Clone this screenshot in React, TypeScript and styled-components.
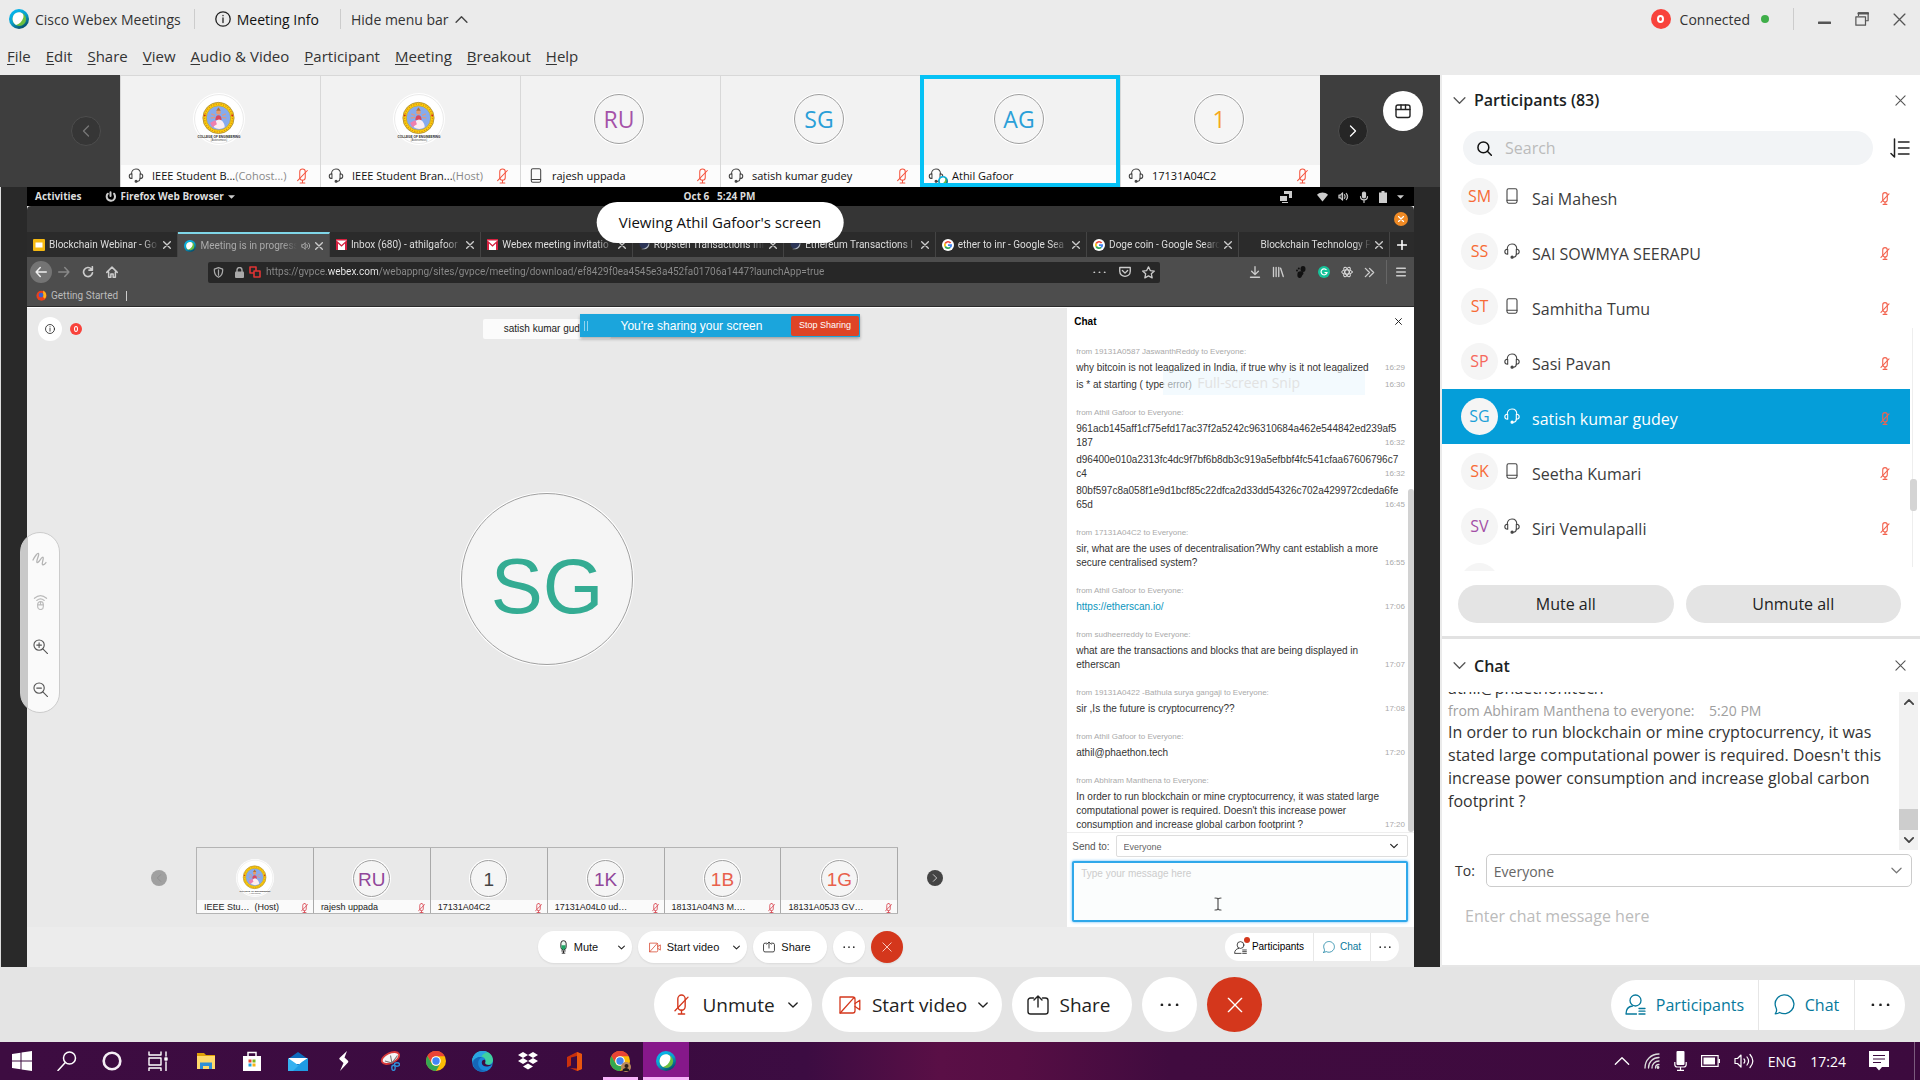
import React from "react";
import styled, { createGlobalStyle, css } from "styled-components";

const UI = '"Open Sans", "Noto Sans", sans-serif';
const ARIAL = '"Liberation Sans", Arial, sans-serif';
const BROWSER = 'Roboto, "Open Sans", sans-serif';

const Global = createGlobalStyle`
  *, *::before, *::after { box-sizing: border-box; }
  body { margin: 0; background: #ebebeb; font-family: ${UI}; color: #333; }
  button, input, select, textarea { font: inherit; color: inherit; margin: 0; }
  button { border: 0; background: none; padding: 0; cursor: pointer; }
  svg { display: block; flex: none; }
  ul { list-style: none; margin: 0; padding: 0; }
  h2, p { margin: 0; }
`;

/* ---------- icons ---------- */
type IconProps = { w?: number; h?: number; color?: string };

const Line = ({
  w = 16, h = w, box = "0 0 16 16", color = "currentColor", sw = 1.2, children,
}: IconProps & { box?: string; sw?: number; children: React.ReactNode }) => (
  <svg width={w} height={h} viewBox={box} fill="none" stroke={color} strokeWidth={sw} strokeLinecap="round" strokeLinejoin="round" aria-hidden="true">
    {children}
  </svg>
);

const MicOff = ({ w = 12, h = 17, color = "#f5523c", sw = 1.3 }: IconProps & { sw?: number }) => (
  <Line w={w} h={h} box="0 0 14 20" color={color} sw={sw}>
    <rect x="3.5" y="1" width="7" height="14.5" rx="3.5" />
    <path d="M7 15.5v3.5M4 19h6M.8 16L13.2 3" />
  </Line>
);
const MicOn = ({ w = 9, h = 14 }: IconProps) => (
  <svg width={w} height={h} viewBox="0 0 10 16" fill="none" stroke="#222" strokeWidth="1.1" aria-hidden="true">
    <rect x="2" y=".8" width="6" height="10.4" rx="3" fill="#e9f7ef" />
    <path d="M2.6 6h4.8v2.6a2.4 2.4 0 0 1-4.8 0z" fill="#1fa564" stroke="none" />
    <path d="M2.5 12.5h5M5 12.5V15M3 15h4" />
  </svg>
);
const Headset = ({ w = 16, h = 16, color = "#444" }: IconProps) => (
  <Line w={w} h={h} color={color} sw={1.1}>
    <path d="M3.2 6.4C3.2 3 5.2 1 8 1s4.8 2 4.8 5.4" />
    <path d="M3.7 6.2c-1.7 0-2.9 1-2.9 2.5s1.2 2.5 2.9 2.5zM12.3 6.2c1.7 0 2.9 1 2.9 2.5s-1.2 2.5-2.9 2.5z" />
    <path d="M12.3 11.2c0 2-1.2 2.9-2.9 3.1" />
    <circle cx="8.1" cy="14.2" r="1.1" fill={color} />
  </Line>
);
const Phone = ({ w = 12, h = 16, color = "#444" }: IconProps) => (
  <Line w={w} h={h} box="0 0 12 16" color={color} sw={1.1}>
    <rect x="1" y=".8" width="10" height="14.4" rx="1.6" />
    <path d="M1 12.2h10" />
  </Line>
);
const VideoOff = ({ w = 22, h = 20, color = "#d4371c" }: IconProps) => (
  <Line w={w} h={h} box="0 0 22 20" color={color} sw={1.3}>
    <path d="M16 6V4.2C16 2.8 15.2 2 13.8 2H1v16h12.8c1.4 0 2.2-.8 2.2-2.2V6" />
    <path d="M16 8.5l4.8-3.3v9.6L16 11.5M1.2 18L15 2.6" />
  </Line>
);
const ShareIcon = ({ w = 22, h = 20 }: IconProps) => (
  <Line w={w} h={h} box="0 0 22 20" sw={1.4}>
    <path d="M6.5 3H3.6C2 3 1 4 1 5.6v10.8C1 18 2 19 3.6 19h14.8c1.6 0 2.6-1 2.6-2.6V5.6C21 4 20 3 18.4 3h-2.9M11 12V1.3M7 5l4-4 4 4" />
  </Line>
);
const Dots = ({ w = 20, color = "#222" }: IconProps) => (
  <svg width={w} height={w / 5} viewBox="0 0 20 4" fill={color} aria-hidden="true">
    <circle cx="2" cy="2" r="1.4" /><circle cx="10" cy="2" r="1.4" /><circle cx="18" cy="2" r="1.4" />
  </svg>
);
const Cross = ({ w = 12, color = "#444", sw = 1.2 }: IconProps & { sw?: number }) => (
  <Line w={w} box="0 0 12 12" color={color} sw={sw}><path d="M1 1l10 10M11 1L1 11" /></Line>
);
const Chev = ({ w = 12, dir = "down", color = "#444", sw = 1.3 }: IconProps & { dir?: "down" | "up" | "left" | "right"; sw?: number }) => {
  const d = { down: "M1 3.5l5 5 5-5", up: "M1 8.5l5-5 5 5", left: "M8.5 1l-5 5 5 5", right: "M3.5 1l5 5-5 5" }[dir];
  return <Line w={w} box="0 0 12 12" color={color} sw={sw}><path d={d} /></Line>;
};
const People = ({ w = 21, color = "#07799c" }: IconProps) => (
  <Line w={w} box="0 0 21 21" color={color} sw={1.3}>
    <circle cx="10.5" cy="6.5" r="5.5" />
    <path d="M7.5 12C3.5 12.5 1 15.5 1 20h10.5M14 14.5h6M14 17.2h6M14 20h6" />
  </Line>
);
const Bubble = ({ w = 21, color = "#07799c" }: IconProps) => (
  <Line w={w} box="0 0 21 21" color={color} sw={1.3}>
    <path d="M1.2 19.8c1.3-1.6 1.7-3.2 1.2-5C.6 11 .8 7 3.3 4.2 6.8.2 12.8-.1 16.7 3.2c4 3.5 4.3 9.3.9 13.1-3.1 3.6-8.3 4.3-12 2.2-1.3.9-2.7 1.3-4.4 1.3z" />
  </Line>
);
const Info = ({ w = 16 }: IconProps) => (
  <Line w={w} sw={1.3} color="#222">
    <circle cx="8" cy="8" r="7.2" /><path d="M8 7v4.5M8 4.3v.4" />
  </Line>
);
const Webex = ({ w = 20 }: IconProps) => (
  <svg width={w} height={w} viewBox="0 0 20 20" aria-hidden="true">
    <defs>
      <linearGradient id="wbx" x1=".2" y1="0" x2=".8" y2="1">
        <stop offset="0" stopColor="#06b9f2" /><stop offset=".5" stopColor="#0a9fc9" /><stop offset="1" stopColor="#06405a" />
      </linearGradient>
    </defs>
    <circle cx="10" cy="10" r="10" fill="url(#wbx)" />
    <circle cx="10.3" cy="10.2" r="6.8" fill="#6cbf3f" />
    <path d="M3.8 11.5C3 7 5.5 3.4 9.8 3.2c3.6-.1 5.4 2.2 4.5 5.5-1.1 3.6-4 6.4-7.3 7.2-1.7-.9-2.9-2.5-3.2-4.4z" fill="#fff" />
  </svg>
);
const Crest = ({ w = 50 }: IconProps) => (
  <svg width={w} height={w} viewBox="0 0 50 50" aria-hidden="true">
    <circle cx="25" cy="25" r="25" fill="#fff" />
    <circle cx="25" cy="25" r="23.5" fill="#fff" stroke="#ddd" strokeWidth=".6" />
    <circle cx="24.5" cy="24" r="15" fill="#fbd20a" stroke="#a98a3a" strokeWidth=".8" />
    <circle cx="24.5" cy="24" r="13.4" fill="none" stroke="#e08a12" strokeWidth="1.2" strokeDasharray="1.2 1.2" />
    <circle cx="11.3" cy="21.5" r=".9" fill="#d8201c" /><circle cx="37.7" cy="21.5" r=".9" fill="#d8201c" />
    <circle cx="24.5" cy="24" r="11.8" fill="#86abee" stroke="#d8a90e" strokeWidth=".8" />
    <circle cx="24.5" cy="18.5" r="2.2" fill="#e79a6c" />
    <path d="M22.3 17l2.2-3.3 2.2 3.3z" fill="#b8742c" />
    <path d="M17.5 20l3.5 1.5M31.5 20L28 21.5M17 24l4-.5M32 24l-4-.5" stroke="#d99a86" strokeWidth="1.3" />
    <path d="M21.5 26c0-3 1-4.5 3-4.5s3 1.5 3 4.500z" fill="#d9485f" />
    <path d="M20 33c0-4 2.500-7.500 5-7.500s5.500 3.500 5.500 7.500c-3.500 2-7 2-10.500 0z" fill="#fbeef2" />
    <path d="M16.5 28.5l5-2.5 1.5 4-4.500 3z" fill="#ee7fb0" />
    <text x="25" y="43" fontSize="3" fontWeight="700" fontFamily="Liberation Sans" textAnchor="middle" fill="#222">COLLEGE OF ENGINEERING</text>
    <text x="25" y="46.5" fontSize="2.5" fontFamily="Liberation Sans" textAnchor="middle" fill="#444">(Autonomous)</text>
  </svg>
);

/* ---------- frame ---------- */
const Shell = styled.div`
  display: flex; flex-direction: column; height: 100vh; min-height: 900px; overflow: hidden;
`;
const Gap = styled.i<{ $w: number }>`flex: none; width: ${(p) => p.$w}px;`;
const TitleBar = styled.header`
  display: flex; align-items: center; height: 38px; padding: 0 14px 0 9px; font-size: 14px; color: #333;
`;
const Brand = styled.div`display: flex; align-items: center; gap: 6px;`;
const Rule = styled.i<{ $h?: number; $c?: string; $m?: string }>`
  flex: none; width: 1px; height: ${(p) => p.$h ?? 20}px; background: ${(p) => p.$c ?? "#ccc"}; margin: ${(p) => p.$m ?? "0 10px"};
`;
const BarButton = styled.button<{ $dark?: boolean }>`display: flex; align-items: center; gap: 6px; ${(p) => p.$dark && "color: #111;"}`;
const Spacer = styled.div`flex: 1;`;
const RedDot = styled.span<{ $d: number }>`
  display: grid; place-items: center; flex: none; width: ${(p) => p.$d}px; height: ${(p) => p.$d}px; border-radius: 50%; background: #f8423b;
  &::after {
    content: ""; width: ${(p) => (p.$d > 15 ? 7 : 4)}px; height: ${(p) => (p.$d > 15 ? 8 : 6)}px;
    border: ${(p) => (p.$d > 15 ? 2 : 1)}px solid #fff; border-radius: 50%;
  }
`;
const GreenDot = styled.i`width: 8px; height: 8px; border-radius: 50%; background: #3fae49; margin-left: 11px;`;
const WindowButtons = styled.div`display: flex; align-items: center; gap: 24px;`;
const MenuBar = styled.nav`
  display: flex; align-items: center; gap: 15px; height: 37px; padding: 0 7px 2px; font-size: 15px; color: #333;
`;
const Mnemonic = styled.span`text-decoration: underline; text-underline-offset: 2px;`;
const Body = styled.div`display: flex; flex: 1; min-height: 0;`;
const Left = styled.main`position: relative; display: flex; flex-direction: column; flex: 1; min-width: 0;`;

/* ---------- film strip ---------- */
const Strip = styled.section`
  display: grid; grid-template-columns: 120px minmax(0, 1fr) 120px; height: 112px; background: #3e3e3e;
`;
const StripEnd = styled.div<{ $right?: boolean }>`
  display: flex; align-items: center; gap: 15px; padding: ${(p) => (p.$right ? "0 0 0 18px" : "0 0 0 71px")};
`;
const RoundArrow = styled.button<{ $dim?: boolean }>`
  display: grid; place-items: center; width: 30px; height: 30px; border-radius: 50%; background: ${(p) => (p.$dim ? "#363636" : "#262626")};
  border: 1px solid #4d4d4d;
`;
const LayoutButton = styled.button`
  display: grid; place-items: center; align-self: flex-start; width: 40px; height: 40px; margin-top: 16px; border-radius: 50%; background: #fff;
`;
const Tiles = styled.ul`display: grid; grid-template-columns: repeat(6, minmax(0, 1fr));`;
const Tile = styled.li<{ $active?: boolean }>`
  position: relative; display: flex; flex-direction: column; background: #f2f2f2;
  border-left: 1px solid #d8d8d8; border-top: 1px solid #d8d8d8;
  ${(p) => p.$active && css`&::after { content: ""; position: absolute; inset: -1px 0 0 -1px; border: 4px solid #06c2f5; }`}
`;
const TileFace = styled.div`display: grid; place-items: center; flex: 1; padding: 0 3px 3px 0;`;
const Initials = styled.span<{ $d: number; $c: string; $s: number; $font?: string; $drop?: number }>`
  display: grid; place-items: center; flex: none; width: ${(p) => p.$d}px; height: ${(p) => p.$d}px; border-radius: 50%;
  border: 1px solid #9f9f9f; background: #f5f5f5; box-shadow: 0 0 0 1px #fff; color: ${(p) => p.$c};
  padding-top: ${(p) => p.$drop ?? 0}px;
  font: 400 ${(p) => p.$s}px/1 ${(p) => p.$font ?? UI};
`;
const TileLabel = styled.div`
  display: flex; align-items: center; height: 22px; padding: 0 12px 1px 7px; background: #fcfcfc; font-size: 11px; color: #111; white-space: nowrap;
`;
const TileIcon = styled.span`position: relative; display: grid; justify-items: center; width: 16px; margin-right: 8px;`;
const Badge = styled.span`position: absolute; right: -4px; bottom: -3px;`;
const TileName = styled.span`flex: 1; small { font-size: 11px; color: #888; }`;

/* ---------- shared screen ---------- */
const Stage = styled.section`
  position: relative; display: flex; flex: 1; min-height: 0; padding: 0 26px; background: #292929; border-left: 1px solid #ddd;
`;
const Desktop = styled.div`display: flex; flex-direction: column; flex: 1; min-width: 0; background: #e9e9e9;`;
const GnomeBar = styled.div`
  display: grid; grid-template-columns: 1fr auto 1fr; align-items: center; height: 19px; padding: 0 10px 0 8px; background: #000;
  font: 700 10px/19px ${UI}; color: #ddd;
`;
const Cluster = styled.div<{ $gap: number; $end?: boolean; $pad?: number }>`
  display: flex; align-items: center; gap: ${(p) => p.$gap}px; padding-left: ${(p) => p.$pad ?? 0}px;
  justify-content: ${(p) => (p.$end ? "flex-end" : "flex-start")};
`;
const WindowTop = styled.div`
  display: flex; align-items: center; justify-content: flex-end; height: 26px; padding: 0 6px; background: #353535; border-radius: 4px 4px 0 0;
`;
const OrangeClose = styled.button`display: grid; place-items: center; width: 14px; height: 14px; border-radius: 50%; background: #f08a24;`;
const TabBar = styled.div`display: flex; height: 25px; background: #2b2b2b;`;
const Tab = styled.button<{ $on?: boolean }>`
  display: flex; align-items: center; gap: 4px; flex: 1 1 0; min-width: 0; padding: 0 6px; text-align: left;
  font: 400 10px/16px ${BROWSER}; color: ${(p) => (p.$on ? "#aaa" : "#ddd")}; background: ${(p) => (p.$on ? "#4d4d4d" : "transparent")};
  border-right: 1px solid #444; ${(p) => p.$on && "border-top: 2px solid #7fd6e8;"}
`;
const TabText = styled.span`
  flex: 1; min-width: 0; overflow: hidden; white-space: nowrap; mask-image: linear-gradient(90deg, #000 85%, transparent);
`;
const NewTab = styled.button`display: grid; place-items: center; width: 24px;`;
const NavBar = styled.div`display: flex; align-items: center; height: 30px; padding: 0 8px 0 3px; background: #4d4d4d; color: #ccc;`;
const BackButton = styled.button`display: grid; place-items: center; width: 22px; height: 22px; border-radius: 50%; background: #747474;`;
const UrlBox = styled.label`
  display: flex; align-items: center; gap: 5px; flex: 1; height: 21px; margin: 0 89px 0 90px; padding: 0 5px; background: #272727; border-radius: 2px;
`;
const Url = styled.input`
  flex: 1; min-width: 0; border: 0; padding: 0; outline: 0; font: 400 10px/16px ${BROWSER}; color: transparent;
  background: linear-gradient(90deg, #8c8c8c 62px, #f0f0f0 62px, #f0f0f0 112px, #8c8c8c 112px);
  -webkit-background-clip: text; background-clip: text;
`;
const Bookmarks = styled.div`
  display: flex; align-items: center; gap: 4px; height: 20px; padding: 0 9px 2px; background: #4d4d4d; border-bottom: 1px solid #2a2a2a;
  font: 400 10px/16px ${BROWSER}; color: #bbb;
`;
const WebApp = styled.div`display: flex; flex-direction: column; flex: 1; min-height: 0; border-top: 1px solid #fff; font-family: ${ARIAL};`;
const WebMain = styled.div`display: grid; grid-template-columns: 3fr 1fr; flex: 1; min-height: 0;`;
const Speaker = styled.div`display: flex; flex-direction: column; min-width: 0;`;
const SpeakerTop = styled.div`
  display: grid; grid-template-columns: 1fr auto 1fr; align-items: center; height: 40px; padding: 2px 11px 0; font-size: 10px; color: #222;
`;
const InfoCircle = styled.button`display: grid; place-items: center; width: 24px; height: 24px; border-radius: 50%; background: #fff;`;
const NameChip = styled.span`padding: 0 21px; height: 20px; line-height: 20px; background: #fbfbfb; border-radius: 2px;`;
const SpeakerFace = styled.div`display: grid; place-items: center; flex: 1;`;
const Thumbs = styled.div`display: flex; align-items: center; gap: 29px; margin: 37px 124px 13px;`;
const SmallArrow = styled.button<{ $c: string }>`
  display: grid; place-items: center; flex: none; width: 16px; height: 16px; margin-bottom: 5px; border-radius: 50%; background: ${(p) => p.$c};
`;
const ThumbList = styled.ul`display: grid; grid-template-columns: repeat(6, minmax(0, 1fr)); flex: 1; border: 1px solid #b4b4b4; border-right: 0;`;
const Thumb = styled.li`display: flex; flex-direction: column; height: 65px; min-width: 0; border-right: 1px solid #a9a9a9;`;
const ThumbFace = styled.div`display: grid; place-items: center; height: 52px; padding-top: 8px;`;
const ThumbLabel = styled.div`
  display: flex; justify-content: space-between; align-items: center; flex: 1; padding: 2px 5px 0 7px; background: #fafafa; font-size: 9px; line-height: 11px; color: #222; white-space: pre;
`;

/* ---------- web chat ---------- */
const WebChat = styled.aside`display: flex; flex-direction: column; min-width: 0; min-height: 0; background: #fff;`;
const WebChatHead = styled.div`
  display: flex; align-items: center; justify-content: space-between; height: 26px; padding: 0 12px 0 7px; color: #000;
  h2 { font-size: 10px; }
`;
const WebLog = styled.div`
  position: relative; flex: 1; min-height: 0; overflow: hidden; padding: 11px 9px 0; border-bottom: 1px solid #eee;
`;
const Post = styled.section`
  margin-bottom: 14px; h3 { margin: 0 0 2px; font: 400 8px/14px ${ARIAL}; color: #aaa; }
`;
const PostBody = styled.div`
  font-size: 10px; line-height: 14px; color: #333; white-space: pre;
  & + & { margin-top: 3px; }
  a { color: #0a95bd; text-decoration: none; }
`;
const PostLine = styled.div`
  display: flex; justify-content: space-between; height: 14px;
  time { font-size: 8px; color: #aaa; }
`;
const WebThumb = styled.i`position: absolute; right: 0; top: 155px; bottom: 0; width: 6px; border-radius: 3px; background: #d2d2d2;`;
const Ghost = styled.span`
  position: absolute; left: 96px; top: 37px; width: 202px; padding-left: 34px; font: 400 14px/24px ${UI}; color: #e2e2e2; background: rgba(235, 246, 253, .6);
`;
const SendRow = styled.label`
  display: flex; align-items: center; gap: 6px; padding: 2px 6px 0 5px; font-size: 10px; color: #555;
`;
const SelectWrap = styled.span<{ $web?: boolean }>`
  display: grid; flex: 1; align-items: center; border: 1px solid ${(p) => (p.$web ? "#ddd" : "#ccc")}; border-radius: ${(p) => (p.$web ? 2 : 5)}px; background: #fff;
  > * { grid-area: 1 / 1; }
  svg { justify-self: end; margin-right: 9px; pointer-events: none; }
`;
const Select = styled.select<{ $h: number; $s: number }>`
  appearance: none; width: 100%; height: ${(p) => p.$h}px; padding: 1px 7px 0; border: 0; background: none; outline: 0; font-size: ${(p) => p.$s}px; color: #666;
`;
const WebCompose = styled.textarea`
  display: block; height: 61px; margin: 4px 6px 5px 5px; padding: 5px 7px; border: 2px solid #2fa8ea; border-radius: 2px; box-shadow: 0 0 3px #62b8f5;
  outline: 0; resize: none; font-size: 10px; background: #fbfdfd; &::placeholder { color: #ccc; opacity: 1; }
`;
const Caret = styled.span`position: absolute; right: 218px; bottom: 56px;`;
const WebBar = styled.div`
  display: grid; grid-template-columns: 1fr auto 1fr; align-items: center; height: 40px; padding: 0 15px; background: #ececec; color: #111;
`;
const WebGroup = styled.div`display: flex; grid-column: 2; gap: 6px;`;
const WebPill = styled.button<{ $w: number; $bg?: string; $pad?: string }>`
  display: flex; align-items: center; justify-content: center; gap: 6px; width: ${(p) => p.$w}px; height: 32px; padding: ${(p) => p.$pad ?? 0};
  border-radius: 16px; background: ${(p) => p.$bg ?? "#fff"}; font: 400 11px/1 ${ARIAL}; box-shadow: 0 1px 2px rgba(0, 0, 0, .08);
`;
const WebRight = styled.div`
  display: flex; justify-self: end; height: 28px; border-radius: 14px; overflow: hidden; background: #fff;
`;
const WebSeg = styled.button<{ $w: number; $c?: string }>`
  display: flex; align-items: center; justify-content: center; gap: 5px; width: ${(p) => p.$w}px; font: 400 10px/1 ${ARIAL}; color: ${(p) => p.$c ?? "#000"};
  & + & { border-left: 1px solid #e8e8e8; }
`;
const DotWrap = styled.span`position: relative; i { position: absolute; right: -3px; top: -4px; width: 6px; height: 6px; border-radius: 50%; background: #d4371c; }`;

/* ---------- overlays on the stage ---------- */
const ViewingPill = styled.div`
  position: absolute; left: 50%; top: 127px; transform: translateX(-50%); height: 41px; padding: 0 22px; border-radius: 21px;
  background: #fff; font-size: 15px; line-height: 41px; color: #111; white-space: nowrap;
`;
const SharingBanner = styled.div`
  position: absolute; left: 50%; top: 239px; transform: translateX(-50%); display: flex; align-items: center; width: 280px; height: 23px; padding: 1px;
  background: #1ba5dc; box-shadow: 0 2px 3px rgba(0, 0, 0, .3); font: 400 12px/1 ${ARIAL}; color: #fff;
  span { flex: 1; padding-left: 4px; text-align: center; }
  &::before { content: ""; width: 4px; height: 10px; margin-left: 3px; border: solid #8fd3ef; border-width: 0 1px; }
`;
const StopButton = styled.button`width: 68px; height: 20px; border-radius: 2px; background: #de4426; font: 400 9px/1 ${ARIAL}; color: #fff;`;
const ToolPill = styled.div`
  position: absolute; left: 20px; top: 457px; display: flex; flex-direction: column; align-items: center; justify-content: space-between; width: 40px; height: 181px; padding: 18px 0 15px;
  border: 1px solid #ccc; border-radius: 20px; background: linear-gradient(90deg, #c9c9c9 7px, #fafafa 7px);
`;

/* ---------- side panels ---------- */
const Side = styled.aside`
  display: flex; flex-direction: column; flex: 0 0 25%; border-left: 2px solid #ebebeb; background: #fff; color: #333;
`;
const PanelHead = styled.div<{ $h: number }>`
  display: flex; align-items: center; gap: 8px; height: ${(p) => p.$h}px; padding: 0 14px 0 11px;
  h2 { flex: 1; font-size: 16px; font-weight: 600; color: #1c1f24; }
`;
const PeoplePanel = styled.section`display: flex; flex-direction: column; flex: 1; min-height: 0;`;
const SearchRow = styled.div`display: flex; align-items: center; gap: 17px; padding: 6px 10px 4px 21px;`;
const SearchBox = styled.label`
  display: flex; align-items: center; gap: 13px; flex: 1; height: 34px; padding: 0 14px; border-radius: 17px; background: #f2f4f6;
  input { flex: 1; border: 0; padding: 0; background: none; outline: 0; font-size: 16px; }
  input::placeholder { color: #bbb; opacity: 1; }
`;
const ListWrap = styled.div`position: relative; flex: 1; min-height: 0; overflow: hidden; padding-right: 10px;`;
const Person = styled.li<{ $on?: boolean }>`
  display: flex; align-items: center; height: 55px; padding: 4px 20px 0 19px; background: ${(p) => (p.$on ? "#059ed9" : "#fff")}; color: ${(p) => (p.$on ? "#fff" : "#3c3c3c")};
  font-size: 16px;
`;
const Face = styled.span<{ $c: string }>`
  display: grid; place-items: center; width: 37px; height: 37px; margin-bottom: 5px; border-radius: 50%; background: #f5f5f5; color: ${(p) => p.$c}; font-size: 16px;
`;
const Device = styled.span`display: grid; justify-items: center; width: 16px; margin: 0 12px 5px 6px;`;
const PersonName = styled.span`flex: 1;`;
const Track = styled.i`position: absolute; right: 7px; top: 159px; bottom: 4px; width: 1px; background: #eee;`;
const ListThumb = styled.i`position: absolute; right: 3px; top: 310px; width: 7px; height: 32px; border-radius: 3px; background: #d4d4d4;`;
const AllRow = styled.div`display: flex; gap: 12px; padding: 14px 19px 13px 16px;`;
const AllButton = styled.button`flex: 1; height: 38px; border-radius: 19px; background: #e4e4e4; font-size: 16px; color: #222;`;
const ChatPanel = styled.section`border-top: 3px solid #e2e2e2;`;
const Log = styled.div`display: flex; height: 158px;`;
const LogText = styled.div`
  display: flex; flex-direction: column; justify-content: flex-end; flex: 1; overflow: hidden; padding: 0 0 37px 6px; font-size: 16px; line-height: 23px; color: #333;
  small { font-size: 14px; line-height: 21px; color: #a0a0a0; white-space: pre; }
  p { flex: none; white-space: pre-line; }
`;
const ScrollBar = styled.div`
  display: flex; flex-direction: column; align-items: center; width: 19px; margin-right: 2px; padding: 5px 0; background: #f1f1f1;
  i { width: 19px; height: 21px; background: #cdcdcd; margin: auto 0 5px; }
`;
const ToRow = styled.label`display: flex; align-items: center; gap: 11px; padding: 4px 8px 0 13px; font-size: 14px;`;
const Compose = styled.textarea`
  display: block; width: 100%; height: 78px; padding: 18px 23px; border: 0; outline: 0; resize: none; font-size: 16px;
  &::placeholder { color: #bbb; opacity: 1; }
`;
const ChatFoot = styled.div`height: 2px; background: #e6e6e6;`;

/* ---------- control bar ---------- */
const Controls = styled.footer`
  display: grid; grid-template-columns: 1fr auto 1fr; align-items: center; height: 75px; padding: 0 15px 0 11px; background: #e4e4e4;
`;
const ControlGroup = styled.div`display: flex; grid-column: 2; gap: 10px;`;
const Pill = styled.button<{ $w: number; $bg?: string; $pad?: string; $gap?: number }>`
  display: flex; align-items: center; justify-content: center; gap: ${(p) => p.$gap ?? 10}px; width: ${(p) => p.$w}px; height: 55px; padding: ${(p) => p.$pad ?? 0};
  border-radius: 28px; background: ${(p) => p.$bg ?? "#fff"}; font-size: 19px; color: #222; white-space: nowrap;
`;
const RightGroup = styled.div`display: flex; justify-self: end; height: 50px; border-radius: 25px; overflow: hidden; background: #fff;`;
const Seg = styled.button<{ $w: number }>`
  display: flex; align-items: center; justify-content: center; gap: 10px; width: ${(p) => p.$w}px; font-size: 16px; color: #07799c;
  & + & { border-left: 1px solid #e6e6e6; }
`;

/* ---------- taskbar ---------- */
const Taskbar = styled.footer`
  display: flex; height: 38px; color: #fff;
  background: linear-gradient(90deg, #3d0c41 0%, #3b0b40 34%, #3c0c42 42%, #5a0f46 49%, #560e44 53%, #400b3f 61%, #3c0a3e 100%);
`;
const Slot = styled.button<{ $w: number; $run?: boolean; $on?: boolean }>`
  display: grid; place-items: center; width: ${(p) => p.$w}px; height: 38px;
  background: ${(p) => (p.$on ? "#86188a" : "none")};
  box-shadow: ${(p) => (p.$on ? "inset 0 -3px #f7b4fa" : "none")};
  ${(p) => p.$run && css`background: linear-gradient(#f7b4fa, #f7b4fa) bottom / 35px 3px no-repeat;`}
`;
const ProfileWrap = styled.span`position: relative; > svg + svg { position: absolute; right: -1px; bottom: -1px; }`;
const Tray = styled.div`
  display: flex; align-items: center; gap: 14px; margin-left: auto; padding-right: 5px; font-size: 14px; color: #fff;
`;

const Chrome = ({ w = 20 }: IconProps) => (
  <svg width={w} height={w} viewBox="0 0 20 20" aria-hidden="true">
    <circle cx="10" cy="10" r="10" fill="#fbbc05" />
    <path d="M1.34 5A10 10 0 0 1 18.66 5.2H10a5 5 0 0 0-4.3 7.3z" fill="#ea4335" />
    <path d="M1.34 5A10 10 0 0 0 10 20l4.3-7.5a5 5 0 0 1-8.6 0z" fill="#34a853" />
    <circle cx="10" cy="10" r="4.8" fill="#fff" /><circle cx="10" cy="10" r="3.7" fill="#4285f4" />
  </svg>
);
const Google = () => (
  <svg width="12" height="12" viewBox="0 0 12 12" fill="none" strokeWidth="1.7" aria-hidden="true">
    <circle cx="6" cy="6" r="6" fill="#fff" />
    <path d="M8.6 4A3.2 3.2 0 0 0 3.2 4.5" stroke="#ea4335" />
    <path d="M3.2 4.5A3.2 3.2 0 0 0 3.2 7.5" stroke="#fbbc05" />
    <path d="M3.2 7.5A3.2 3.2 0 0 0 8.2 8.3" stroke="#34a853" />
    <path d="M8.2 8.3C8.9 7.7 9.2 7 9.2 6.2H6" stroke="#4285f4" />
  </svg>
);
const Gmail = () => (
  <svg width="11" height="11" viewBox="0 0 11 11" aria-hidden="true">
    <rect width="11" height="11" fill="#fff" /><path d="M0 1l5.5 5L11 1v10H9V4.5L5.5 7.7 2 4.5V11H0z" fill="#d5203f" /><path d="M0 0h11v1.5H0z" fill="#d5203f" />
  </svg>
);
const Slides = () => (
  <svg width="12" height="12" viewBox="0 0 12 12" aria-hidden="true"><rect width="12" height="12" rx="1" fill="#f5b912" /><rect x="2.5" y="3.5" width="7" height="5" fill="#fff" /></svg>
);
const Swoosh = () => (
  <svg width="11" height="11" viewBox="0 0 11 11" aria-hidden="true"><circle cx="5" cy="5" r="4.5" fill="#2c3557" /><path d="M2 10C7 10 9.5 7 10 3c1.5 4-2 8.5-8 7z" fill="#aeb6c4" /></svg>
);
const Fox = ({ w = 11 }: IconProps) => (
  <svg width={w} height={w} viewBox="0 0 12 12" aria-hidden="true">
    <circle cx="6" cy="6.2" r="5.5" fill="#e8401c" /><path d="M8 .5c3 2 4 5 2.5 8C8.5 10.5 7 8 8 .5z" fill="#ffb21a" /><circle cx="5.5" cy="5.5" r="2.6" fill="#3a5fd0" />
  </svg>
);

const tiles = [
  { name: "IEEE Student B...", role: "(Cohost...)", muted: true },
  { name: "IEEE Student Bran...", role: "(Host)", muted: true },
  { name: "rajesh uppada", ini: "RU", c: "#a552a8", phone: true, muted: true },
  { name: "satish kumar gudey", ini: "SG", c: "#2a9fd8", muted: true },
  { name: "Athil Gafoor", ini: "AG", c: "#2a9fd8", active: true },
  { name: "17131A04C2", ini: "1", c: "#f5a81c", muted: true },
];
const thumbs = [
  { name: "IEEE Stu…  (Host)" },
  { name: "rajesh uppada", ini: "RU", c: "#91479a" },
  { name: "17131A04C2", ini: "1", c: "#444" },
  { name: "17131A04L0 ud…", ini: "1K", c: "#91479a" },
  { name: "18131A04N3 M.…", ini: "1B", c: "#e8604c" },
  { name: "18131A05J3 GV…", ini: "1G", c: "#e8604c" },
];
const tabs = [
  { t: "Blockchain Webinar - Go", i: <Slides /> },
  { t: "Meeting is in progress", i: <Webex w={12} />, on: true },
  { t: "Inbox (680) - athilgafoor", i: <Gmail /> },
  { t: "Webex meeting invitatio", i: <Gmail /> },
  { t: "Ropsten Transactions Inf", i: <Swoosh /> },
  { t: "Ethereum Transactions I", i: <Swoosh /> },
  { t: "ether to inr - Google Sea", i: <Google /> },
  { t: "Doge coin - Google Searc", i: <Google /> },
  { t: "Blockchain Technology P", i: <Gap $w={12} /> },
];
const posts: { from: string; rows: { t: string; at: string; link?: boolean }[] }[] = [
  { from: "from 19131A0587 JaswanthReddy to Everyone:", rows: [
    { t: "why bitcoin is not leagalized in India, if true why is it not leagalized", at: "16:29" },
    { t: "is * at starting ( type error)", at: "16:30" }] },
  { from: "from Athil Gafoor to Everyone:", rows: [
    { t: "961acb145aff1cf75efd17ac37f2a5242c96310684a462e544842ed239af5\n187", at: "16:32" },
    { t: "d96400e010a2313fc4dc9f7bf6b8db3c919a5efbbf4fc541cfaa67606796c7\nc4", at: "16:32" },
    { t: "80bf597c8a058f1e9d1bcf85c22dfca2d33dd54326c702a429972cdeda6fe\n65d", at: "16:45" }] },
  { from: "from 17131A04C2 to Everyone:", rows: [
    { t: "sir, what are the uses of decentralisation?Why cant establish a more\nsecure centralised system?", at: "16:55" }] },
  { from: "from Athil Gafoor to Everyone:", rows: [{ t: "https://etherscan.io/", at: "17:06", link: true }] },
  { from: "from sudheerreddy to Everyone:", rows: [
    { t: "what are the transactions and blocks that are being displayed in\netherscan", at: "17:07" }] },
  { from: "from 19131A0422 -Bathula surya gangaji to Everyone:", rows: [{ t: "sir ,Is the future is cryptocurrency??", at: "17:08" }] },
  { from: "from Athil Gafoor to Everyone:", rows: [{ t: "athil@phaethon.tech", at: "17:20" }] },
  { from: "from Abhiram Manthena to Everyone:", rows: [
    { t: "In order to run blockchain or mine cryptocurrency, it was stated large\ncomputational power is required. Doesn't this increase power\nconsumption and increase global carbon footprint ?", at: "17:20" }] },
];
const people = [
  { ini: "SM", name: "Sai Mahesh", c: "#f76b35", phone: true },
  { ini: "SS", name: "SAI SOWMYA SEERAPU", c: "#f76b35" },
  { ini: "ST", name: "Samhitha Tumu", c: "#f76b35", phone: true },
  { ini: "SP", name: "Sasi Pavan", c: "#f5685c" },
  { ini: "SG", name: "satish kumar gudey", c: "#1ba0d8", on: true },
  { ini: "SK", name: "Seetha Kumari", c: "#f76b35", phone: true },
  { ini: "SV", name: "Siri Vemulapalli", c: "#a34fa6" },
  { ini: "", name: "", c: "#f76b35" },
];
const menus = ["File", "Edit", "Share", "View", "Audio & Video", "Participant", "Meeting", "Breakout", "Help"];

function Filmstrip() {
  return (
    <Strip>
      <StripEnd><RoundArrow $dim aria-label="Previous"><Chev dir="left" color="#777" /></RoundArrow></StripEnd>
      <Tiles>
        {tiles.map((t) => (
          <Tile key={t.name} $active={t.active}>
            <TileFace>{t.ini ? <Initials $d={50} $c={t.c!} $s={23}>{t.ini}</Initials> : <Crest w={52} />}</TileFace>
            <TileLabel>
              <TileIcon>{t.phone ? <Phone h={15} /> : <Headset h={15} />}{t.active && <Badge><Webex w={10} /></Badge>}</TileIcon>
              <TileName>{t.name}{t.role && <small>{t.role}</small>}</TileName>
              {t.muted && <MicOff w={11} h={16} />}
            </TileLabel>
          </Tile>
        ))}
      </Tiles>
      <StripEnd $right>
        <RoundArrow aria-label="Next"><Chev dir="right" color="#fff" /></RoundArrow>
        <LayoutButton aria-label="Layout">
          <Line w={16} color="#222" sw={1.4}><rect x="1" y="2" width="14" height="12.5" rx="2" /><path d="M1 6.5h14M6 2v4.5M10.5 2v4.5" /></Line>
        </LayoutButton>
      </StripEnd>
    </Strip>
  );
}

function Browser() {
  return (
    <>
      <GnomeBar>
        <Cluster $gap={24}>
          <span>Activities</span>
          <Cluster $gap={4}>
            <Line w={11} box="0 0 12 12" color="#ccc" sw={2.2}><path d="M3 3C1 5 1.5 10 6 10.5s6-4 4-7.5M6 1.5v4" /></Line>
            Firefox Web Browser
            <svg width="7" height="4" viewBox="0 0 8 4" fill="#ccc"><path d="M0 0h8L4 4z" /></svg>
          </Cluster>
        </Cluster>
        <span>Oct 6&nbsp;&nbsp; 5:24 PM</span>
        <Cluster $gap={10} $end>
          <svg width="12" height="12" viewBox="0 0 12 12" fill="#ccc"><path d="M4 0h8v7H9V3H4zM0 5h7v5H0zM2 11h6v1H2z" /></svg>
          <Gap $w={5} />
          <svg width="11" height="10" viewBox="0 0 12 10" fill="#ccc"><path d="M0 2.5C3.5-.8 8.5-.8 12 2.5L6 10z" /></svg>
          <Line w={11} box="0 0 12 12" color="#ccc"><path d="M1 4.5v3h1.5L5 10V2L2.5 4.5zM7 4c1 1 1 3 0 4M9 2.5c2 2 2 5 0 7" fill="#ccc" fillOpacity=".4" /></Line>
          <Line w={10} h={12} box="0 0 10 12" color="#ccc"><rect x="3.5" y="1" width="3" height="6" rx="1.5" fill="#ccc" /><path d="M1.5 5.5c0 4.5 7 4.5 7 0M5 9v2.5" /></Line>
          <svg width="8" height="12" viewBox="0 0 8 12" fill="#ccc"><path d="M2.5 0h3v1.5H8V12H0V1.5h2.5z" /></svg>
          <svg width="7" height="4" viewBox="0 0 8 4" fill="#ccc"><path d="M0 0h8L4 4z" /></svg>
        </Cluster>
      </GnomeBar>
      <WindowTop><OrangeClose aria-label="Close window"><Cross w={6} color="#fff" sw={2.5} /></OrangeClose></WindowTop>
      <TabBar>
        {tabs.map((t) => (
          <Tab key={t.t} $on={t.on}>
            {t.i}<TabText>{t.t}</TabText>
            {t.on && <Line w={10} box="0 0 12 12" color="#aaa"><path d="M1 4.5v3h1.5L5 10V2L2.5 4.5zM7 4c1 1 1 3 0 4M9 2.5c2 2 2 5 0 7" /></Line>}
            <Cross w={8} color="#ccc" sw={2} />
          </Tab>
        ))}
        <NewTab aria-label="New tab"><Line w={10} color="#fff" sw={2.5}><path d="M8 1v14M1 8h14" /></Line></NewTab>
      </TabBar>
      <NavBar>
        <BackButton aria-label="Back"><Line w={12} color="#eee" sw={2}><path d="M15 8H1.5M7 2L1.5 8 7 14" /></Line></BackButton>
        <Cluster $gap={12} $pad={6}>
          <Line w={12} color="#888" sw={2}><path d="M1 8h13.5M9 2l5.5 6L9 14" /></Line>
          <Line w={12} color="#ccc" sw={2.2}><path d="M14 9A6 6 0 1 1 12.5 4M13.8 1v4.5H9.3" /></Line>
          <Line w={12} color="#ccc" sw={2}><path d="M1 8.5L8 1.5l7 7M3.5 8v7h3v-4.5h3V15h3V8" /></Line>
        </Cluster>
        <UrlBox>
          <Line w={11} color="#aaa" sw={1.8}><path d="M8 1l6 2c.5 6-1 9.5-6 12-5-2.5-6.5-6-6-12zM8 4v8" /></Line>
          <Gap $w={1} />
          <svg width="9" height="11" viewBox="0 0 9 11"><rect y="4.5" width="9" height="6.5" rx="1" fill="#aaa" /><path d="M2 5V3a2.5 2.5 0 0 1 5 0v2" fill="none" stroke="#aaa" strokeWidth="1.4" /></svg>
          <Line w={12} box="0 0 12 12" color="#e03535" sw={1.6}><path d="M7 4V1H1v6h3M5 5h6v6H5z" /></Line>
          <Url aria-label="Address" defaultValue="https://gvpce.webex.com/webappng/sites/gvpce/meeting/download/ef8429f0ea4545e3a452fa01706a1447?launchApp=true" />
          <Dots w={13} color="#ccc" />
          <Gap $w={3} />
          <Line w={12} color="#ccc" sw={1.8}><path d="M1 2h14v5c0 9-14 9-14 0zM4.5 6L8 9.5 11.5 6" /></Line>
          <Gap $w={1} />
          <Line w={13} color="#ccc" sw={1.6}><path d="M8 1l2.2 4.6 5 .6-3.7 3.4 1 5L8 12.2 3.5 14.6l1-5L.8 6.2l5-.6z" /></Line>
        </UrlBox>
        <Cluster $gap={11}>
          <Line w={12} color="#ccc" sw={1.8}><path d="M8 1v10M3.5 7L8 11.5 12.5 7M2 15h12" /></Line>
          <Line w={12} color="#ccc" sw={1.8}><path d="M2 2v12M5.5 2v12M9 2v12M11.5 3L15 14" /></Line>
          <svg width="12" height="12" viewBox="0 0 12 12" fill="#111"><ellipse cx="8" cy="3" rx="2.5" ry="3" /><path d="M3 6c3-2 7 0 5 2.5-1.5 1-1 3.5-3.5 3.5C2 12 2 8 3 6z" /><circle cx="3.8" cy="2.5" r="1" /><circle cx="2" cy="4.5" r="1" /></svg>
          <svg width="12" height="12" viewBox="0 0 12 12"><circle cx="6" cy="6" r="6" fill="#15c39a" /><path d="M8.5 4A3 3 0 1 0 9 6.5H6.5" fill="none" stroke="#fff" strokeWidth="1.2" /></svg>
          <Line w={12} color="#ddd" sw={1.3}><ellipse cx="8" cy="8" rx="7" ry="2.8" /><ellipse cx="8" cy="8" rx="7" ry="2.8" transform="rotate(60 8 8)" /><ellipse cx="8" cy="8" rx="7" ry="2.8" transform="rotate(120 8 8)" /></Line>
          <Line w={11} color="#ccc" sw={2}><path d="M2 2l6 6-6 6M8 2l6 6-6 6" /></Line>
          <Rule $h={24} $c="#666" $m="0 -2px 0 0" />
          <Line w={10} color="#ccc" sw={2.2}><path d="M1 2h14M1 8h14M1 14h14" /></Line>
        </Cluster>
      </NavBar>
      <Bookmarks><Fox />Getting Started<Rule $h={10} $c="#ccc" $m="0 4px" /></Bookmarks>
    </>
  );
}

function PostText({ t, at, link }: { t: string; at: string; link?: boolean }) {
  const lines = t.split("\n");
  return (
    <PostBody>
      {lines.map((l, i) => (
        <PostLine key={i}>
          {link ? <a href={l}>{l}</a> : <span>{l}</span>}
          {i === lines.length - 1 && <time>{at}</time>}
        </PostLine>
      ))}
    </PostBody>
  );
}

function WebMeeting() {
  return (
    <WebApp>
      <WebMain>
        <Speaker>
          <SpeakerTop>
            <Cluster $gap={8}><InfoCircle aria-label="Info"><Info w={10} /></InfoCircle><RedDot $d={12} /></Cluster>
            <NameChip>satish kumar gudey</NameChip>
          </SpeakerTop>
          <SpeakerFace><Initials $d={172} $c="#34ac93" $s={78} $font={ARIAL} $drop={14}>SG</Initials></SpeakerFace>
          <Thumbs>
            <SmallArrow $c="#a0a0a0" aria-label="Previous"><Chev w={8} dir="left" color="#8c8c8c" /></SmallArrow>
            <ThumbList>
              {thumbs.map((t) => (
                <Thumb key={t.name}>
                  <ThumbFace>{t.ini ? <Initials $d={37} $c={t.c!} $s={19} $font={ARIAL} $drop={3}>{t.ini}</Initials> : <Crest w={38} />}</ThumbFace>
                  <ThumbLabel>{t.name}<MicOff w={7} h={10} color="#d8434e" sw={1.6} /></ThumbLabel>
                </Thumb>
              ))}
            </ThumbList>
            <SmallArrow $c="#444" aria-label="Next"><Chev w={8} dir="right" color="#ddd" /></SmallArrow>
          </Thumbs>
        </Speaker>
        <WebChat>
          <WebChatHead><h2>Chat</h2><button aria-label="Close chat"><Cross w={7} color="#222" sw={1.7} /></button></WebChatHead>
          <WebLog>
            <Ghost>Full-screen Snip</Ghost>
            {posts.map((p, i) => (
              <Post key={i}>
                <h3>{p.from}</h3>
                {p.rows.map((r) => <PostText key={r.t} {...r} />)}
              </Post>
            ))}
            <WebThumb />
          </WebLog>
          <SendRow>Send to:
            <SelectWrap $web>
              <Select $h={20} $s={9}><option>Everyone</option></Select><Chev w={8} color="#222" sw={1.8} />
            </SelectWrap>
          </SendRow>
          <WebCompose aria-label="Message" placeholder="Type your message here" />
        </WebChat>
      </WebMain>
      <WebBar>
        <WebGroup>
          <WebPill $w={94} $pad="0 0 0 14px"><MicOn />Mute<Gap $w={8} /><Chev w={7} color="#222" sw={1.8} /></WebPill>
          <WebPill $w={109} $pad="0 0 0 4px"><VideoOff w={12} h={11} />Start video<Gap $w={2} /><Chev w={7} color="#222" sw={1.8} /></WebPill>
          <WebPill $w={74} $pad="0 6px 0 0"><ShareIcon w={12} h={12} />Share</WebPill>
          <WebPill $w={32} aria-label="More"><Dots w={12} /></WebPill>
          <WebPill $w={32} $bg="#d4371c" aria-label="Leave"><Cross w={10} color="#f7c8bf" /></WebPill>
        </WebGroup>
        <WebRight>
          <WebSeg $w={88}><DotWrap><People w={13} color="#222" /><i /></DotWrap>Participants</WebSeg>
          <WebSeg $w={57} $c="#07799c"><Bubble w={12} />Chat</WebSeg>
          <WebSeg $w={29} aria-label="More"><Dots w={12} /></WebSeg>
        </WebRight>
      </WebBar>
    </WebApp>
  );
}

export default function App() {
  return (
    <Shell>
      <Global />
      <TitleBar>
        <Brand><Webex w={20} />Cisco Webex Meetings</Brand>
        <Rule $m="0 20px 0 13px" />
        <BarButton $dark><Info w={16} />Meeting Info</BarButton>
        <Rule $m="0 10px 0 21px" />
        <BarButton>Hide menu bar<Chev dir="up" w={13} /></BarButton>
        <Spacer />
        <RedDot $d={20} /><Gap $w={9} />Connected<GreenDot />
        <Rule $h={22} $m="0 24px" />
        <WindowButtons>
          <button aria-label="Minimize"><Line w={13} sw={3} color="#555"><path d="M1 12h14" /></Line></button>
          <button aria-label="Restore"><Line w={14} color="#555" sw={1.4}><path d="M4 4V1h11v9h-3" /><path d="M4 1.6h11" strokeWidth="2.4" /><path d="M1 5.5h11v9.5H1z" /></Line></button>
          <button aria-label="Close"><Cross w={13} color="#555" /></button>
        </WindowButtons>
      </TitleBar>
      <MenuBar>
        {menus.map((m) => <button key={m}><Mnemonic>{m[0]}</Mnemonic>{m.slice(1)}</button>)}
      </MenuBar>
      <Body>
        <Left>
          <Filmstrip />
          <Stage><Desktop><Browser /><WebMeeting /></Desktop></Stage>
          <SharingBanner><span>You're sharing your screen</span><StopButton>Stop Sharing</StopButton></SharingBanner>
          <ViewingPill>Viewing Athil Gafoor's screen</ViewingPill>
          <ToolPill>
            <button aria-label="Annotate"><Line w={16} color="#b4b4b4" sw={1.3}><path d="M1 9C3 5 5.5 1.8 6.5 2.5 7.8 3.6 3.8 10 5 11.5 6.5 12.8 9.5 5.5 11 6.3 12.2 7.2 9.3 12.5 10.5 13.6 11.7 14.3 13.4 12.6 14 11.5" /></Line></button>
            <button aria-label="Remote control"><Line w={15} color="#bbb"><path d="M1.5 3.5c4-3.5 9-3.5 13 0M4 5.8c2.5-2 5.5-2 8 0" /><rect x="5" y="7" width="6" height="8.5" rx="3" /><path d="M5 10.5h6M8 7v3.5" /></Line></button>
            <button aria-label="Zoom in"><Line w={15} color="#555"><circle cx="6.5" cy="6.5" r="5.5" /><path d="M10.5 10.5l5 5M4 6.5h5M6.5 4v5" /></Line></button>
            <button aria-label="Zoom out"><Line w={15} color="#555"><circle cx="6.5" cy="6.5" r="5.5" /><path d="M10.5 10.5l5 5M4 6.5h5" /></Line></button>
          </ToolPill>
          <Caret><Line w={8} h={14} box="0 0 8 14" color="#555"><path d="M1 1c2 0 3 .5 3 1.5C4 1.5 5 1 7 1M4 2.5v9M1 13c2 0 3-.5 3-1.5 0 1 1 1.5 3 1.5" /></Line></Caret>
        </Left>
        <Side>
          <PeoplePanel>
            <PanelHead $h={50}><Chev w={13} color="#555" sw={1.2} /><h2>Participants (83)</h2><button aria-label="Close participants"><Cross w={11} color="#555" /></button></PanelHead>
            <SearchRow>
              <SearchBox><Line w={15} color="#111" sw={1.6}><circle cx="6.8" cy="6.8" r="5.8" /><path d="M11 11l4.3 4.3" /></Line><input aria-label="Search" placeholder="Search" /></SearchBox>
              <button aria-label="Sort"><Line w={20} box="0 0 20 20" color="#222" sw={1.5}><path d="M4.5 1v18L1 15.5M8.5 4H19M8.5 10H19M8.5 16H19" /></Line></button>
            </SearchRow>
            <ListWrap>
              <ul>
                {people.map((p, i) => (
                  <Person key={i} $on={p.on}>
                    <Face $c={p.c}>{p.ini}</Face>
                    {p.name && <>
                      <Device>{p.phone ? <Phone /> : <Headset color={p.on ? "#fff" : "#444"} />}</Device>
                      <PersonName>{p.name}</PersonName>
                      <MicOff w={10} h={13} color="#f3634f" sw={1.7} />
                    </>}
                  </Person>
                ))}
              </ul>
              <Track /><ListThumb />
            </ListWrap>
            <AllRow><AllButton>Mute all</AllButton><AllButton>Unmute all</AllButton></AllRow>
          </PeoplePanel>
          <ChatPanel>
            <PanelHead $h={53}><Chev w={13} color="#555" sw={1.2} /><h2>Chat</h2><button aria-label="Close chat panel"><Cross w={11} color="#555" /></button></PanelHead>
            <Log>
              <LogText>
                <p>athil@phaethon.tech</p>
                <small>from Abhiram Manthena to everyone:    5:20 PM</small>
                <p>{"In order to run blockchain or mine cryptocurrency, it was\nstated large computational power is required. Doesn't this\nincrease power consumption and increase global carbon\nfootprint ?"}</p>
              </LogText>
              <ScrollBar><Chev w={10} dir="up" color="#444" sw={2.2} /><i /><Chev w={10} color="#444" sw={2.2} /></ScrollBar>
            </Log>
            <ToRow>To:
              <SelectWrap><Select $h={31} $s={14}><option>Everyone</option></Select><Chev w={11} color="#777" /></SelectWrap>
            </ToRow>
            <Compose aria-label="Chat message" placeholder="Enter chat message here" />
            <ChatFoot />
          </ChatPanel>
        </Side>
      </Body>
      <Controls>
        <ControlGroup>
          <Pill $w={158} $gap={13} $pad="0 0 0 6px"><MicOff w={15} h={21} color="#d4371c" />Unmute<Chev w={10} color="#222" sw={1.6} /></Pill>
          <Pill $w={180} $gap={11} $pad="0 0 0 3px"><VideoOff />Start video<Chev w={10} color="#222" sw={1.6} /></Pill>
          <Pill $w={120} $pad="0 6px 0 0"><ShareIcon />Share</Pill>
          <Pill $w={55} aria-label="More options"><Dots w={19} /></Pill>
          <Pill $w={55} $bg="#d4371c" aria-label="Leave meeting"><Cross w={16} color="#fff" sw={1} /></Pill>
        </ControlGroup>
        <RightGroup>
          <Seg $w={147}><People />Participants</Seg>
          <Seg $w={96}><Bubble />Chat</Seg>
          <Seg $w={51} aria-label="More panels"><Dots w={19} /></Seg>
        </RightGroup>
      </Controls>
      <Taskbar>
        <Slot $w={44} aria-label="Start"><svg width="20" height="20" viewBox="0 0 20 20" fill="#fff"><path d="M0 3l8.5-1.3v7.8H0zM9.5 1.5L20 0v9.5H9.5zM0 10.5h8.5v7.8L0 17zM9.5 10.5H20V20L9.5 18.5z" /></svg></Slot>
        <Slot $w={45} aria-label="Search Windows"><Line w={20} box="0 0 20 20" color="#fff" sw={1.5}><circle cx="12.5" cy="7" r="6" /><path d="M8.3 11.5L1 19.5" /></Line></Slot>
        <Slot $w={45} aria-label="Cortana"><svg width="20" height="20" viewBox="0 0 20 20" fill="none" stroke="#f5eef5" strokeWidth="2.6"><circle cx="10" cy="10" r="8.3" /></svg></Slot>
        <Slot $w={48} aria-label="Task view"><Line w={20} box="0 0 20 20" color="#fff" sw={1.4}><path d="M1 1v3h12V1M1 7h12v7H1zM1 20v-3h12v3M18 1v4M18 11v9" /><rect x="17" y="7" width="2" height="2" fill="#fff" /></Line></Slot>
        <Slot $w={47} aria-label="Explorer"><svg width="20" height="18" viewBox="0 0 20 18"><path d="M1 1h7l2 2h9v14H1z" fill="#e0a008" /><path d="M1 4h18v13H1z" fill="#ffd96b" /><path d="M4 17v-6.5h12V17h-3v-3H7v3z" fill="#2f8fd8" /></svg></Slot>
        <Slot $w={46} aria-label="Store"><svg width="20" height="20" viewBox="0 0 20 20"><path d="M6 6V1.5h8V6" fill="none" stroke="#fff" strokeWidth="1.5" /><path d="M1 5h18v15H1z" fill="#fff" /><path d="M6.5 8.5h3v3h-3z" fill="#e8472c" /><path d="M10.5 8.5h3v3h-3z" fill="#7bb51f" /><path d="M6.5 12.5h3v3h-3z" fill="#1fa2e0" /><path d="M10.5 12.5h3v3h-3z" fill="#f7b514" /></svg></Slot>
        <Slot $w={46} aria-label="Mail"><svg width="20" height="19" viewBox="0 0 20 19"><path d="M0 7l10-7 10 7v12H0z" fill="#0f6cbd" /><path d="M1 6h18v6H1z" fill="#fff" /><path d="M0 6l10 7 10-7v13H0z" fill="#35b1f0" /><path d="M20 6v13H5l9-9z" fill="#1f9be4" /></svg></Slot>
        <Slot $w={46} aria-label="Bolt"><svg width="12" height="20" viewBox="0 0 12 20" fill="#fff"><path d="M9 0L1.5 7c-.4.5-.3 1 .2 1.4L5.5 12 2 20l8-8.5c.5-.6.5-1.2 0-1.8L6.5 6.5z" /></svg></Slot>
        <Slot $w={46} aria-label="Snipping tool"><svg width="20" height="20" viewBox="0 0 20 20" fill="none"><ellipse cx="10.5" cy="7" rx="9.3" ry="5" transform="rotate(-25 10.5 7)" fill="#f6f6f6" stroke="#d83a3a" strokeWidth="1.8" /><path d="M10.5 4.5l1.5 8M5 10l7 2M17.5 4.5L12 12" stroke="#777" strokeWidth="1.1" /><ellipse cx="13.5" cy="16.8" rx="1.7" ry="2.6" stroke="#2f8fd8" strokeWidth="1.4" /><ellipse cx="17" cy="13.5" rx="2.5" ry="1.7" stroke="#2f8fd8" strokeWidth="1.4" /></svg></Slot>
        <Slot $w={46} aria-label="Chrome"><Chrome /></Slot>
        <Slot $w={46} aria-label="Edge"><svg width="21" height="21" viewBox="0 0 20 20"><circle cx="10" cy="10" r="10" fill="#1a86d8" /><path d="M0 10C.5 3.5 5 0 10 0c6 0 10 4 10 8.5 0 3-2.5 4.5-5 4.5-2 0-3-1-2.5-2 1.5-3-1-5.5-4-5.5C5 5.5 1.5 7 0 10z" fill="#3fd0a0" /><path d="M0 10C.5 3.5 5 0 10 0c2 0 3.5.4 5 1.2-3 .3-5 1.8-6 4.3C5 5.5 1.5 7 0 10z" fill="#2aa5e4" /><path d="M9.5 6c-3 1.5-4 4-3.5 7 .6 3.5 4 6 8 5.5-7 3.5-13-1.5-13-7C1.5 7.5 5.5 5 9.5 6z" fill="#1566b8" /><path d="M12.5 11c.4-1 .3-1.8-.2-2.6-1.8-.3-3 .8-3 2.8 0 2.3 2.4 4 5.5 3.6 1.8-.3 3.3-1 4.2-2.3-3 1.5-7 1-6.5-1.5z" fill="#3d0c41" /></svg></Slot>
        <Slot $w={46} aria-label="Dropbox"><svg width="20" height="18" viewBox="0 0 20 18" fill="#fff"><path d="M5 0l5 3-5 3-5-3zM15 0l5 3-5 3-5-3zM5 6l5 3-5 3-5-3zM15 6l5 3-5 3-5-3zM10 11.5l5 3-5 3-5-3z" /></svg></Slot>
        <Slot $w={46} aria-label="Office"><svg width="17" height="19" viewBox="0 0 17 19"><path d="M11 0l5 2v15l-5 2-7-3 7 .5V4L5 5.5v8L1 15.5V5z" fill="#c9300c" /><path d="M11 0l5 2v15l-5 2z" fill="#e8560f" /></svg></Slot>
        <Slot $w={46} $run aria-label="Chrome profile"><ProfileWrap><Chrome /><svg width="10" height="10" viewBox="0 0 10 10"><circle cx="5" cy="5" r="5" fill="#b98a5e" /><circle cx="5.5" cy="4" r="2" fill="#2c211b" /><path d="M1.5 9c0-4 7-4 7 0z" fill="#1c1a1a" /></svg></ProfileWrap></Slot>
        <Slot $w={46} $on aria-label="Webex"><Webex /></Slot>
        <Tray>
          <Chev dir="up" w={16} color="#fff" sw={1} />
          <Line w={16} color="#ddd" sw={1.3}><path d="M1 15C1 7 7 1 15 1M4.5 15C4.5 9 9 4.5 15 4.5M8 15c0-4 3-7 7-7M11.5 15c0-2 1.5-3.5 3.5-3.5" /><circle cx="14" cy="14.5" r=".8" fill="#fff" /></Line>
          <svg width="13" height="20" viewBox="0 0 13 20"><rect x="2.5" width="8" height="14" rx="1" fill="#fff" /><path d="M.8 11v2.5c0 1.5 1 2.5 2.5 2.5h6.4c1.5 0 2.5-1 2.5-2.5V11M6.5 16v3M3 19.3h7" fill="none" stroke="#fff" strokeWidth="1.2" /></svg>
          <svg width="19" height="12" viewBox="0 0 19 12"><rect x=".6" y=".6" width="16.5" height="10.8" fill="none" stroke="#fff" strokeWidth="1.2" /><path d="M2.5 2.5h11.5v7H2.5zM17.5 4H19v4h-1.5z" fill="#fff" /></svg>
          <Line w={20} h={16} box="0 0 20 16" color="#fff" sw={1.2}><path d="M1 5.5v5h2.5L7 14V2L3.5 5.5zM10 6c1 1.2 1 2.8 0 4M13 4c2 2.5 2 5.5 0 8M16 1.5c3.5 4 3.5 9 0 13" /></Line>
          <span>ENG</span>
          <span>17:24</span>
          <Rule $h={1} $c="transparent" $m="0 -3px" />
          <svg width="20" height="20" viewBox="0 0 20 20"><path d="M0 0h20v16h-7l-3 3.5L7 16H0z" fill="#fff" /><path d="M4 4.5h12M4 8h12M4 11.5h8" stroke="#3c0a3e" strokeWidth="1.2" /></svg>
          <Rule $h={38} $c="#7b5a7d" $m="0 0 0 11px" />
        </Tray>
      </Taskbar>
    </Shell>
  );
}
